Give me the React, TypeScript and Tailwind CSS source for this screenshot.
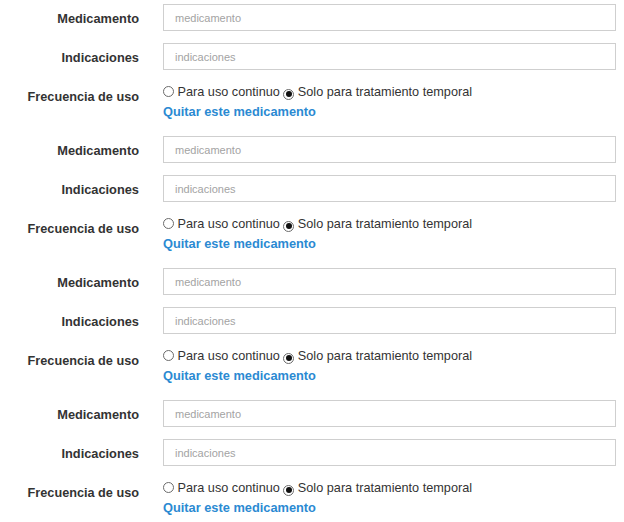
import React from "react";

function Radio({ checked }: { checked?: boolean }) {
  return (
    <span className="inline-flex h-[11px] w-[11px] items-center justify-center rounded-full border border-[#6b6b6b] bg-white align-[-1px]">
      {checked ? <span className="h-[6px] w-[6px] rounded-full bg-[#111]" /> : null}
    </span>
  );
}

function Block() {
  return (
    <div className="flex flex-col">
      <div className="flex items-center gap-[24px]">
        <label className="w-[139px] pt-[2px] text-right text-[12.8px] font-bold text-[#333]">Medicamento</label>
        <input
          className="h-[27px] flex-1 border border-[#cfcfcf] px-[11px] text-[11px] text-[#555] outline-none placeholder:text-[#a3a3a3]"
          placeholder="medicamento"
        />
      </div>
      <div className="mt-[12px] flex items-center gap-[24px]">
        <label className="w-[139px] pt-[2px] text-right text-[12.8px] font-bold text-[#333]">Indicaciones</label>
        <input
          className="h-[27px] flex-1 border border-[#cfcfcf] px-[11px] text-[11px] text-[#555] outline-none placeholder:text-[#a3a3a3]"
          placeholder="indicaciones"
        />
      </div>
      <div className="mt-[12px] flex items-start gap-[24px]">
        <label className="w-[139px] pt-[5px] text-right text-[12.7px] font-bold leading-[20px] text-[#333]">
          Frecuencia de uso
        </label>
        <div className="flex flex-1 flex-col">
          <div className="text-[12.7px] leading-[20px] text-[#333]">
            <Radio /> Para uso continuo <Radio checked /> Solo para tratamiento temporal
          </div>
          <a className="cursor-pointer text-[12.8px] font-bold leading-[20px] text-[#2b8ad2]">Quitar este medicamento</a>
        </div>
      </div>
    </div>
  );
}

export default function App() {
  return (
    <div
      className="min-h-[522px] w-[624px] bg-white pr-[8px] pt-[4px]"
      style={{ fontFamily: '"Liberation Sans", Arial, sans-serif' }}
    >
      <div className="flex flex-col gap-[14px]">
        <Block />
        <Block />
        <Block />
        <Block />
      </div>
    </div>
  );
}
